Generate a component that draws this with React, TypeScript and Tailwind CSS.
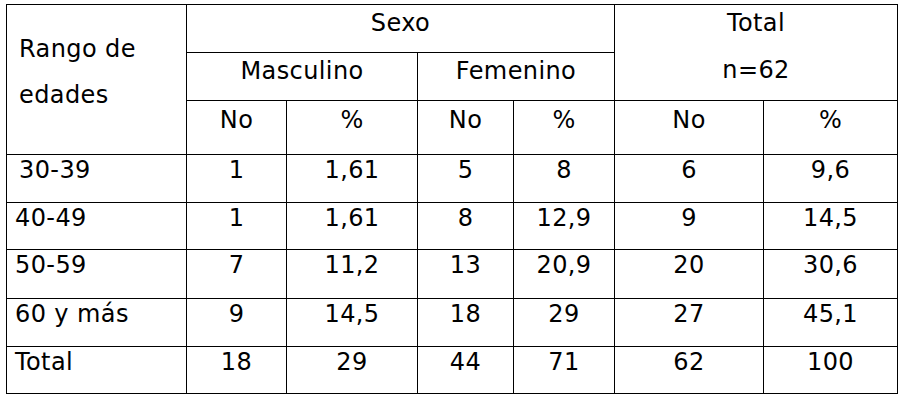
import React from 'react';

type Row = { label: string; pad: string; h: string; cells: string[] };

const rows: Row[] = [
  { label: '30-39', pad: 'pl-[12px]', h: 'h-[48px]', cells: ['1', '1,61', '5', '8', '6', '9,6'] },
  { label: '40-49', pad: 'pl-[8px]', h: 'h-[47px]', cells: ['1', '1,61', '8', '12,9', '9', '14,5'] },
  { label: '50-59', pad: 'pl-[8px]', h: 'h-[49px]', cells: ['7', '11,2', '13', '20,9', '20', '30,6'] },
  { label: '60 y más', pad: 'pl-[8px]', h: 'h-[48px]', cells: ['9', '14,5', '18', '29', '27', '45,1'] },
  { label: 'Total', pad: 'pl-[8px]', h: 'h-[47px]', cells: ['18', '29', '44', '71', '62', '100'] },
];

const cell = 'border border-black align-top p-0';

const App: React.FC = () => {
  return (
    <div className="min-h-[401px] w-[906px] bg-white pt-[4px] pl-[6px] text-black">
      <table
        className="table-fixed border-collapse w-[891px] text-[24px] leading-[26px] tracking-[0.4px]"
        style={{ fontFamily: '"DejaVu Sans", Verdana, sans-serif' }}
      >
        <colgroup>
          <col className="w-[180px]" />
          <col className="w-[100px]" />
          <col className="w-[131px]" />
          <col className="w-[96px]" />
          <col className="w-[101px]" />
          <col className="w-[149px]" />
          <col className="w-[134px]" />
        </colgroup>
        <thead>
          {/* Header rows */}
          <tr className="h-[48px]">
            <th rowSpan={3} className={`${cell} text-left font-normal pl-[12px] pt-[21px] leading-[46px]`}>
              Rango de
              <br />
              edades
            </th>
            <th colSpan={4} className={`${cell} text-center font-normal pt-[5px]`}>
              Sexo
            </th>
            <th colSpan={2} rowSpan={2} className={`${cell} text-center font-normal pt-[5px]`}>
              <div>Total</div>
              <div className="mt-[21px]">n=62</div>
            </th>
          </tr>
          <tr className="h-[48px]">
            <th colSpan={2} className={`${cell} text-center font-normal pt-[5px]`}>
              Masculino
            </th>
            <th colSpan={2} className={`${cell} text-center font-normal pt-[5px]`}>
              Femenino
            </th>
          </tr>
          <tr className="h-[54px]">
            {['No', '%', 'No', '%', 'No', '%'].map((t, i) => (
              <th key={i} className={`${cell} text-center font-normal pt-[6px]`}>
                {t}
              </th>
            ))}
          </tr>
        </thead>
        <tbody>
          {rows.map((r) => (
            <tr key={r.label} className={r.h}>
              <td className={`${cell} ${r.pad} pt-[2px] text-left`}>{r.label}</td>
              {r.cells.map((c, i) => (
                <td key={i} className={`${cell} pt-[2px] text-center`}>
                  {c}
                </td>
              ))}
            </tr>
          ))}
        </tbody>
      </table>
    </div>
  );
};

export default App;
